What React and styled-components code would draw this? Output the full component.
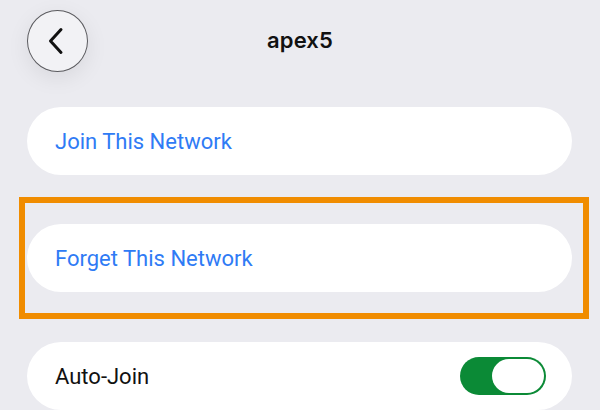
import styled, { createGlobalStyle } from "styled-components";

const GlobalStyle = createGlobalStyle`
  html, body {
    margin: 0;
    padding: 0;
    background: #ebebf0;
  }
  body {
    font-family: Inter, "Noto Sans", sans-serif;
    -webkit-font-smoothing: antialiased;
  }
`;

const Screen = styled.div`
  width: 600px;
  height: 410px;
  overflow: hidden;
  background: #ebebf0;
  display: flex;
  flex-direction: column;
`;

const Header = styled.header`
  position: relative;
  height: 84px;
  display: flex;
  align-items: center;
  justify-content: center;
`;

const BackButton = styled.button`
  position: absolute;
  left: 27px;
  top: 10px;
  width: 61px;
  height: 62px;
  border-radius: 50%;
  border: 1px solid #5a5a5e;
  background: #f2f2f5;
  box-shadow: 0 6px 22px rgba(0, 0, 0, 0.08);
  display: flex;
  align-items: center;
  justify-content: center;
  padding: 0 4px 0 0;
`;

const Title = styled.h1`
  margin: 0;
  font-size: 22px;
  font-weight: 600;
  color: #111;
  letter-spacing: 0.1px;
  transform: translateY(-1px);
`;

const List = styled.div`
  display: flex;
  flex-direction: column;
  padding: 26px 28px 0 27px;
`;

const Card = styled.div`
  height: 68px;
  border-radius: 34px;
  background: #fff;
  display: flex;
  align-items: center;
  justify-content: space-between;
  padding: 0 26px 0 28px;
  font-family: Roboto, Inter, sans-serif;
  font-size: 22px;
  color: ${(p) => (p.$action ? "#2f7bf5" : "#111")};
`;

const Highlight = styled.div`
  margin: 22px -17px 23px -8px;
  border: 6px solid #f08c00;
  padding: 21px 11px 21px 2px;
`;

const Toggle = styled.div`
  width: 86px;
  height: 38px;
  border-radius: 19px;
  background: #0b8a36;
  display: flex;
  align-items: center;
  justify-content: flex-end;
  padding: 2px;
  box-sizing: border-box;
`;

const Knob = styled.div`
  width: 52px;
  height: 34px;
  border-radius: 17px;
  background: #fff;
`;

export default function App() {
  return (
    <>
      <GlobalStyle />
      <Screen>
        <Header>
          <BackButton aria-label="Back">
            <svg width="18" height="28" viewBox="0 0 18 28" fill="none">
              <path
                d="M14 2.5L3.5 14 14 25.5"
                stroke="#111"
                strokeWidth="3"
                strokeLinecap="round"
                strokeLinejoin="round"
              />
            </svg>
          </BackButton>
          <Title>apex5</Title>
        </Header>
        <List>
          <Card $action>Join This Network</Card>
          <Highlight>
            <Card $action>Forget This Network</Card>
          </Highlight>
          <Card>
            Auto-Join
            <Toggle>
              <Knob />
            </Toggle>
          </Card>
        </List>
      </Screen>
    </>
  );
}
